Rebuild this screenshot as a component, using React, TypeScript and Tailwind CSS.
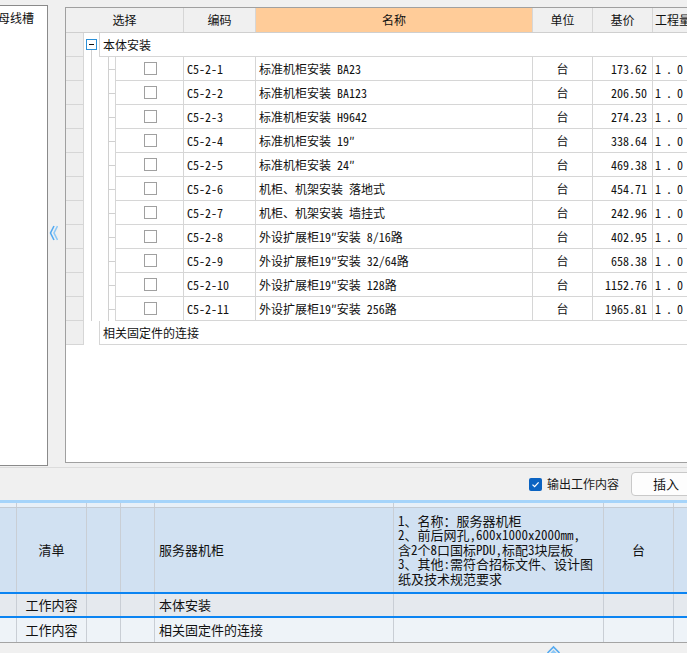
import React from 'react';

const items = [
  { code: 'C5-2-1', name: '标准机柜安装 BA23', price: '173.62' },
  { code: 'C5-2-2', name: '标准机柜安装 BA123', price: '206.50' },
  { code: 'C5-2-3', name: '标准机柜安装 H9642', price: '274.23' },
  { code: 'C5-2-4', name: '标准机柜安装 19″', price: '338.64' },
  { code: 'C5-2-5', name: '标准机柜安装 24″', price: '469.38' },
  { code: 'C5-2-6', name: '机柜、机架安装 落地式', price: '454.71' },
  { code: 'C5-2-7', name: '机柜、机架安装 墙挂式', price: '242.96' },
  { code: 'C5-2-8', name: '外设扩展柜19″安装 8/16路', price: '402.95' },
  { code: 'C5-2-9', name: '外设扩展柜19″安装 32/64路', price: '658.38' },
  { code: 'C5-2-10', name: '外设扩展柜19″安装 128路', price: '1152.76' },
  { code: 'C5-2-11', name: '外设扩展柜19″安装 256路', price: '1965.81' },
];

const descLines = [
  '1、名称：服务器机柜',
  '2、前后网孔,600x1000x2000mm,',
  '含2个8口国标PDU,标配3块层板',
  '3、其他:需符合招标文件、设计图',
  '纸及技术规范要求',
];

function RowHead() {
  return <div className="w-[18px] shrink-0 bg-[#efefef] border-r border-b border-[#d6d6d6]" />;
}

function TreeLines() {
  return (
    <svg width="31" height="24" className="shrink-0">
      <line x1="7.5" y1="0" x2="7.5" y2="24" stroke="#d0d0d0" />
      <line x1="24.5" y1="0" x2="24.5" y2="24" stroke="#d0d0d0" />
      <line x1="24" y1="12.5" x2="31" y2="12.5" stroke="#d0d0d0" />
    </svg>
  );
}

function BottomRow({ bg, h, kind, name, desc, unit }: { bg: string; h: string; kind: string; name: string; desc?: boolean; unit?: string }) {
  return (
    <div className={`flex shrink-0 ${h} ${bg}`}>
      <div className="w-[17px] shrink-0 border-r border-[#c9ced5]" />
      <div className="w-[70px] shrink-0 border-r border-[#c9ced5] flex items-center justify-center">{kind}</div>
      <div className="w-[34px] shrink-0 border-r border-[#c9ced5]" />
      <div className="w-[34px] shrink-0 border-r border-[#c9ced5]" />
      <div className="w-[239px] shrink-0 border-r border-[#c9ced5] flex items-center pl-[4px]">{name}</div>
      <div className="w-[210px] shrink-0 border-r border-[#c9ced5] flex flex-col justify-center pl-[4px] leading-[14.6px]">
        {desc && descLines.map((l) => <div key={l} className="whitespace-nowrap">{l}</div>)}
      </div>
      <div className="w-[70px] shrink-0 border-r border-[#c9ced5] flex items-center justify-center">{unit}</div>
      <div className="flex-1" />
    </div>
  );
}

export default function App() {
  return (
    <div className="w-[687px] h-[653px] overflow-hidden bg-[#f0f0f0] text-[12px] text-[#111] font-['Noto_Sans_Mono_CJK_SC','Noto_Sans_CJK_SC',sans-serif] flex flex-col">
      {/* upper area */}
      <div className="flex h-[468px] shrink-0 border-b border-[#dcdcdc]">
        {/* left tree panel */}
        <div className="mt-[5px] h-[461px] w-[48px] shrink-0 bg-white border-t border-r border-b border-[#8a8a8a] overflow-hidden">
          <div className="-ml-[2px] pt-[4px] leading-[16px] whitespace-nowrap">母线槽</div>
        </div>

        {/* collapse handle */}
        <div className="w-[17px] shrink-0 flex items-center pl-[1px] pb-[1px]">
          <svg width="9" height="16" viewBox="0 0 9 16">
            <path d="M5 1 L1.5 8 L5 15" fill="none" stroke="#55aaf0" strokeWidth="1.6" />
            <path d="M8.5 1 L5 8 L8.5 15" fill="none" stroke="#8cc8f7" strokeWidth="1.6" />
          </svg>
        </div>

        {/* right grid panel */}
        <div className="mt-[7px] h-[456px] flex-1 min-w-0 bg-white border-l border-t border-b border-[#a0a0a0] overflow-hidden">
          <div className="w-[720px] flex flex-col">
            {/* header */}
            <div className="flex h-[25px] bg-[#f0f0f0] border-b border-[#cfcfcf]">
              <div className="w-[118px] shrink-0 border-r border-[#d6d6d6] flex items-center justify-center">选择</div>
              <div className="w-[72px] shrink-0 border-r border-[#d6d6d6] flex items-center justify-center">编码</div>
              <div className="w-[277px] shrink-0 bg-[#ffcc99] border-r border-[#d6d6d6] flex items-center justify-center">名称</div>
              <div className="w-[60px] shrink-0 border-r border-[#d6d6d6] flex items-center justify-center">单位</div>
              <div className="w-[60px] shrink-0 border-r border-[#d6d6d6] flex items-center justify-center">基价</div>
              <div className="flex-1 flex items-center pl-[2px]">工程量</div>
            </div>

            {/* group row */}
            <div className="flex h-[24px]">
              <RowHead />
              <svg width="15" height="24" className="shrink-0">
                <line x1="7.5" y1="16" x2="7.5" y2="24" stroke="#d0d0d0" />
                <rect x="2.5" y="6.5" width="10" height="10" fill="white" stroke="#2a90d8" />
                <line x1="5" y1="11.5" x2="10" y2="11.5" stroke="#111" />
              </svg>
              <div className="flex-1 border-l border-b border-[#d6d6d6] flex items-center pl-[3px]">本体安装</div>
            </div>

            {/* item rows */}
            {items.map((it) => (
              <div key={it.code} className="flex h-[24px]">
                <RowHead />
                <TreeLines />
                <div className="w-[69px] shrink-0 border-l border-r border-b border-[#d6d6d6] flex items-center justify-center">
                  <div className="w-[13px] h-[13px] bg-white border border-[#a0a0a0] ml-[1px]" />
                </div>
                <div className="w-[72px] shrink-0 border-r border-b border-[#d6d6d6] flex items-center pl-[3px]">{it.code}</div>
                <div className="w-[277px] shrink-0 border-r border-b border-[#d6d6d6] flex items-center pl-[3px] whitespace-nowrap">{it.name}</div>
                <div className="w-[60px] shrink-0 border-r border-b border-[#d6d6d6] flex items-center justify-center">台</div>
                <div className="w-[60px] shrink-0 border-r border-b border-[#d6d6d6] flex items-center justify-end pr-[5px]">{it.price}</div>
                <div className="flex-1 border-b border-[#d6d6d6] flex items-center pl-[2px] tracking-[5px] whitespace-nowrap">1.000</div>
              </div>
            ))}

            {/* trailing group row */}
            <div className="flex h-[24px]">
              <RowHead />
              <div className="w-[15px] shrink-0" />
              <div className="flex-1 border-l border-b border-[#d6d6d6] flex items-center pl-[3px]">相关固定件的连接</div>
            </div>
          </div>
        </div>
      </div>

      {/* toolbar */}
      <div className="h-[32px] shrink-0 flex items-center pl-[529px] whitespace-nowrap overflow-hidden">
        <div className="w-[13px] h-[13px] shrink-0 rounded-[2px] bg-[#0a63c2] flex items-center justify-center">
          <svg width="9" height="9" viewBox="0 0 9 9">
            <path d="M1.5 4.6 L3.6 6.6 L7.6 2.4" fill="none" stroke="white" strokeWidth="1.3" />
          </svg>
        </div>
        <span className="ml-[5px] text-[#1a1a1a]">输出工作内容</span>
        <div className="ml-[12px] w-[70px] h-[24px] shrink-0 bg-[#fdfdfd] border border-[#c9c9c9] rounded-[4px] flex items-center justify-center text-[13px]">插入</div>
      </div>

      {/* bottom list */}
      <div className="flex flex-col text-[13px] text-[#111]">
        <div className="h-[3px] bg-[#a6d4fa]" />
        <BottomRow bg="bg-[#e8f0f8] border-b border-[#c4cbd3]" h="h-[5px]" kind="" name="" />
        <BottomRow bg="bg-[#d1e1f2]" h="h-[84px]" kind="清单" name="服务器机柜" desc unit="台" />
        <div className="h-[2px] bg-[#0b84f2]" />
        <BottomRow bg="bg-[#e5e9ee]" h="h-[22px]" kind="工作内容" name="本体安装" />
        <div className="h-[2px] bg-[#0b84f2]" />
        <BottomRow bg="bg-[#eef3f8] border-b border-[#a4a4a4]" h="h-[25px]" kind="工作内容" name="相关固定件的连接" />
        <div className="pl-[546px] pt-[2px]">
          <svg width="15" height="12" viewBox="0 0 15 12">
            <path d="M1.5 8 L7.5 2 L13.5 8" fill="none" stroke="#55aaf0" strokeWidth="1.6" />
            <path d="M1.5 12 L7.5 6 L13.5 12" fill="none" stroke="#8cc8f7" strokeWidth="1.6" />
          </svg>
        </div>
      </div>
    </div>
  );
}
